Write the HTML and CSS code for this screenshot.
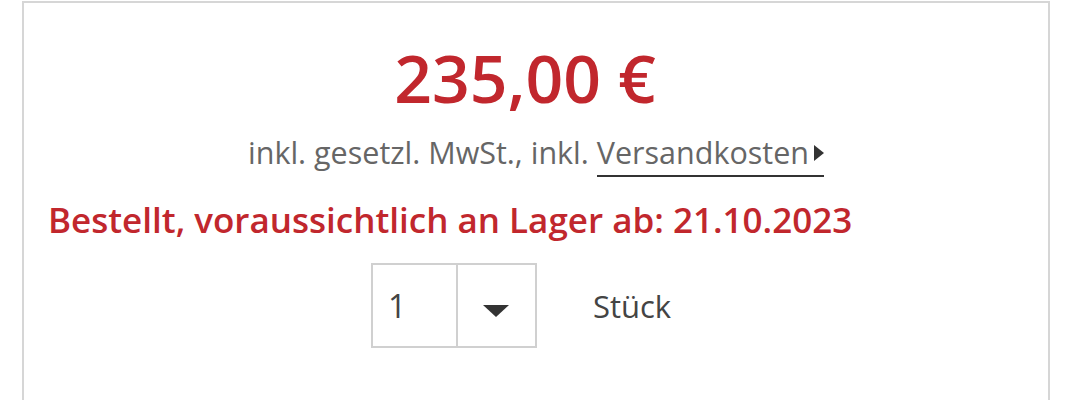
FILE: index.html
```html
<!DOCTYPE html>
<html lang="de">

<head>
    <meta charset="UTF-8">
    <meta name="viewport" content="width=device-width, initial-scale=1.0">
    <title>Preis</title>
    <link rel="stylesheet" href="styles.css">
</head>

<body>
    <div class="buybox">
        <div class="price">235,00 €</div>
        <div class="tax">
            inkl. gesetzl. MwSt., inkl. <a class="shipping" href="#">Versandkosten<span class="arrow"></span></a>
        </div>
        <div class="delivery">Bestellt, voraussichtlich an Lager ab: 21.10.2023</div>
        <div class="qty">
            <div class="qty_select">
                <div class="qty_value">1</div>
                <div class="qty_btn"><span class="caret"></span></div>
            </div>
            <div class="qty_unit">Stück</div>
        </div>
    </div>
</body>

</html>
```

FILE: styles.css
```css
body {
    margin: 0;
    background: #fff;
    font-family: "Open Sans", "Liberation Sans", sans-serif;
    overflow: hidden;
}

.buybox {
    margin: 1px 20px 0 22px;
    height: 420px;
    border: 2px solid #d6d6d6;
    padding: 0 24px;
}

.price {
    margin-top: 34px;
    text-align: center;
    font-size: 66px;
    font-weight: 600;
    line-height: 80px;
    color: #c1272d;
    padding-right: 22px;
}

.tax {
    margin-top: 14px;
    text-align: center;
    font-size: 30.5px;
    line-height: 42px;
    color: #666;
}

.shipping {
    color: #666;
    text-decoration: none;
    border-bottom: 2px solid #333;
    padding-bottom: 2px;
}

.arrow {
    display: inline-block;
    width: 0;
    height: 0;
    margin-left: 5px;
    border-left: 10px solid #333;
    border-top: 8px solid transparent;
    border-bottom: 8px solid transparent;
    vertical-align: 3px;
}

.delivery {
    margin-top: 24px;
    font-size: 35px;
    font-weight: 600;
    line-height: 46px;
    color: #c1272d;
}

.qty {
    display: flex;
    justify-content: center;
    align-items: center;
    gap: 56px;
    margin-top: 20px;
    padding-right: 30px;
}

.qty_select {
    display: flex;
    width: 162px;
    height: 81px;
    border: 2px solid #d0d0d0;
}

.qty_value {
    width: 68px;
    padding-left: 15px;
    font-size: 32px;
    line-height: 81px;
    color: #444;
    border-right: 2px solid #d0d0d0;
}

.qty_btn {
    flex: 1;
    display: flex;
    align-items: center;
    justify-content: center;
}

.caret {
    width: 0;
    height: 0;
    margin-top: 10px;
    border-top: 12px solid #333;
    border-left: 13px solid transparent;
    border-right: 13px solid transparent;
}

.qty_unit {
    font-size: 31px;
    color: #444;
}
```
